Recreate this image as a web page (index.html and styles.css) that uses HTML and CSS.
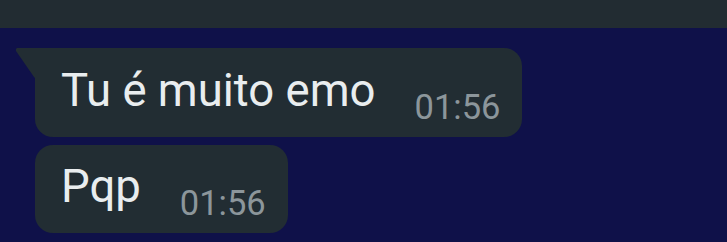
FILE: index.html
```html
<!DOCTYPE html>
<html lang="pt">
<head>
<meta charset="utf-8">
<link rel="stylesheet" href="styles.css">
</head>
<body>
<div class="topbar"></div>
<div class="chat">
  <div class="bubble tail">
    <span class="text">Tu é muito emo</span>
    <span class="time">01:56</span>
  </div>
  <div class="bubble">
    <span class="text">Pqp</span>
    <span class="time">01:56</span>
  </div>
</div>
</body>
</html>
```
FILE: styles.css
```css
html, body {
  margin: 0;
  padding: 0;
  background: #0f1149;
  height: 100%;
  overflow: hidden;
}
body {
  font-family: Roboto, "Noto Sans", sans-serif;
}
.topbar {
  height: 28px;
  background: #222c32;
}
.chat {
  display: flex;
  flex-direction: column;
  align-items: flex-start;
  gap: 8px;
  padding: 20px 0 0 35px;
}
.bubble {
  position: relative;
  display: flex;
  align-items: flex-end;
  background: #222d33;
  border-radius: 18px;
  padding: 16px 22px 10px 26px;
}
.bubble.tail {
  border-top-left-radius: 0;
  padding-top: 17px;
}
.bubble.tail::before {
  content: "";
  position: absolute;
  left: -19px;
  top: 0;
  width: 19px;
  height: 30px;
  background: #222d33;
  clip-path: polygon(1px 0, 19px 0, 19px 30px, 18px 29px, 0 3px, 0 1px);
}
.text {
  font-size: 45.5px;
  line-height: 52px;
  color: #e9edef;
  margin-bottom: 10px;
}
.time {
  font-size: 34.5px;
  line-height: 39px;
  color: #8c969b;
  margin-left: 39px;
}
```
